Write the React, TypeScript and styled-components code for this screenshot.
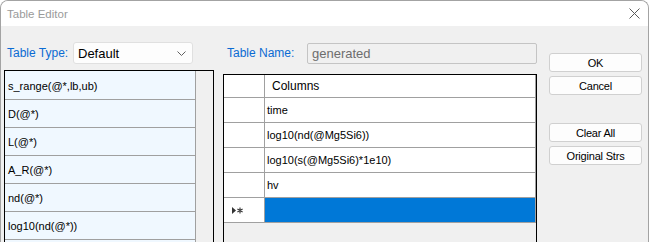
import styled, { createGlobalStyle } from "styled-components";

const GlobalStyle = createGlobalStyle`
  html, body {
    margin: 0;
    padding: 0;
    background: #ffffff;
  }
  * {
    box-sizing: border-box;
  }
`;

const Window = styled.div`
  width: 649px;
  height: 242px;
  border: 1px solid #a3a3a3;
  border-bottom: none;
  border-radius: 8px 8px 0 0;
  overflow: hidden;
  background: #f0f0f0;
  font-family: "Liberation Sans", Arial, sans-serif;
`;

const TitleBar = styled.div`
  height: 25px;
  background: #ffffff;
  display: flex;
  align-items: center;
  justify-content: space-between;
  padding: 0 8px 0 6px;
`;

const Title = styled.span`
  font-size: 11.5px;
  color: #9a9a9a;
`;

const Body = styled.div`
  display: flex;
  align-items: flex-start;
  padding: 16px 0 0 3px;
`;

const LeftCol = styled.div`
  width: 210px;
  display: flex;
  flex-direction: column;
`;

const MidCol = styled.div`
  width: 314px;
  margin-left: 9px;
  display: flex;
  flex-direction: column;
`;

const ButtonCol = styled.div`
  width: 93px;
  margin-left: 12px;
  padding-top: 11px;
  display: flex;
  flex-direction: column;
`;

const FieldRow = styled.div`
  height: 22px;
  display: flex;
  align-items: center;
`;

const Label = styled.span<{ $indent: number; $width: number }>`
  margin-left: ${(p) => p.$indent}px;
  width: ${(p) => p.$width}px;
  font-size: 12px;
  color: #0b6bd3;
  white-space: nowrap;
`;

const Combo = styled.div`
  width: 120px;
  height: 22px;
  background: #fdfdfd;
  border: 1px solid #e0e0e0;
  border-radius: 3px;
  display: flex;
  align-items: center;
  justify-content: space-between;
  padding: 0 6px 0 4px;
  font-size: 13px;
  color: #000;
`;

const NameBox = styled.div`
  width: 230px;
  height: 21px;
  margin-top: 1px;
  background: #f0f0f0;
  border: 1px solid #c4c4c4;
  border-radius: 2px;
  display: flex;
  align-items: center;
  padding-left: 4px;
  font-size: 13px;
  color: #6d6d6d;
`;

const List = styled.div`
  margin-top: 6px;
  height: 180px;
  border: 1px solid #000;
  display: flex;
`;

const ListItems = styled.div`
  width: 191px;
  padding-top: 1px;
  border-right: 1px solid #a0a0a0;
  background: #f0f8ff;
  display: flex;
  flex-direction: column;
`;

const ListItem = styled.div`
  height: 28px;
  flex-shrink: 0;
  border-bottom: 1px solid #a0a0a0;
  display: flex;
  align-items: center;
  padding-left: 3px;
  font-size: 11px;
  color: #000;
`;

const ScrollTrack = styled.div`
  flex: 1;
  background: #f0f0f0;
`;

const Grid = styled.div`
  margin-top: 10px;
  height: 180px;
  border: 1px solid #000;
  background: #f0f0f0;
  display: flex;
  flex-direction: column;
`;

const GridRow = styled.div<{ $height: number }>`
  height: ${(p) => p.$height}px;
  flex-shrink: 0;
  display: flex;
  border-bottom: 1px solid #a0a0a0;
`;

const RowHeader = styled.div`
  width: 41px;
  background: #ffffff;
  border-right: 1px solid #a0a0a0;
  display: flex;
  align-items: center;
  padding-left: 8px;
`;

const Cell = styled.div<{ $selected?: boolean; $header?: boolean }>`
  width: 271px;
  border-right: 1px solid #a0a0a0;
  background: ${(p) => (p.$selected ? "#0078d7" : "#ffffff")};
  display: flex;
  align-items: center;
  padding-left: ${(p) => (p.$header ? 7 : 2)}px;
  font-size: ${(p) => (p.$header ? 12 : 11)}px;
  color: #000;
`;

const Button = styled.div<{ $gap: number }>`
  height: 19px;
  margin-top: ${(p) => p.$gap}px;
  background: #fdfdfd;
  border: 1px solid #d0d0d0;
  border-radius: 3px;
  display: flex;
  align-items: center;
  justify-content: center;
  font-size: 11px;
  letter-spacing: -0.2px;
  color: #000;
`;

const listItems = [
  "s_range(@*,lb,ub)",
  "D(@*)",
  "L(@*)",
  "A_R(@*)",
  "nd(@*)",
  "log10(nd(@*))",
];

const columns = [
  "time",
  "log10(nd(@Mg5Si6))",
  "log10(s(@Mg5Si6)*1e10)",
  "hv",
];

const CloseIcon = () => (
  <svg width="11" height="11" viewBox="0 0 11 11">
    <path d="M0.5 0.5 L10.5 10.5 M10.5 0.5 L0.5 10.5" stroke="#5a5a5a" strokeWidth="1" />
  </svg>
);

const Chevron = () => (
  <svg width="9" height="5" viewBox="0 0 9 5">
    <path d="M0.5 0.5 L4.5 4.5 L8.5 0.5" fill="none" stroke="#606060" strokeWidth="1" />
  </svg>
);

const NewRowMarker = () => (
  <svg width="11" height="7" viewBox="0 0 11 7">
    <path d="M0 0 L4 3.5 L0 7 Z" fill="#333" />
    <path d="M8 0.5 V6.5 M5.4 2 L10.6 5 M10.6 2 L5.4 5" stroke="#333" strokeWidth="1.1" />
  </svg>
);

const App = () => {
  return (
    <>
      <GlobalStyle />
      <Window>
        <TitleBar>
          <Title>Table Editor</Title>
          <CloseIcon />
        </TitleBar>
        <Body>
          <LeftCol>
            <FieldRow>
              <Label $indent={3} $width={66}>Table Type:</Label>
              <Combo>
                <span>Default</span>
                <Chevron />
              </Combo>
            </FieldRow>
            <List>
              <ListItems>
                {listItems.map((item) => (
                  <ListItem key={item}>{item}</ListItem>
                ))}
              </ListItems>
              <ScrollTrack />
            </List>
          </LeftCol>
          <MidCol>
            <FieldRow>
              <Label $indent={4} $width={80}>Table Name:</Label>
              <NameBox>generated</NameBox>
            </FieldRow>
            <Grid>
              <GridRow $height={23}>
                <RowHeader />
                <Cell $header>Columns</Cell>
              </GridRow>
              {columns.map((c) => (
                <GridRow key={c} $height={25}>
                  <RowHeader />
                  <Cell>{c}</Cell>
                </GridRow>
              ))}
              <GridRow $height={25}>
                <RowHeader>
                  <NewRowMarker />
                </RowHeader>
                <Cell $selected />
              </GridRow>
            </Grid>
          </MidCol>
          <ButtonCol>
            <Button $gap={0}>OK</Button>
            <Button $gap={4}>Cancel</Button>
            <Button $gap={28}>Clear All</Button>
            <Button $gap={4}>Original Strs</Button>
          </ButtonCol>
        </Body>
      </Window>
    </>
  );
};

export default App;
